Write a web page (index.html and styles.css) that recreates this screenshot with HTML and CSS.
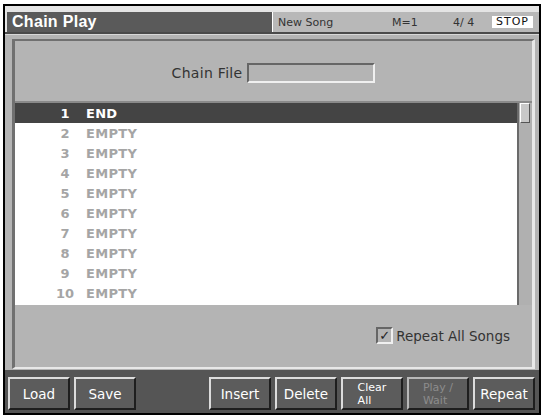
FILE: index.html
```html
<!DOCTYPE html>
<html>
<head>
<meta charset="utf-8">
<link rel="stylesheet" href="styles.css">
</head>
<body>
<div class="screen">
  <div class="topgap"></div>
  <div class="titlebar">
    <div class="tab">Chain Play</div>
    <div class="status">
      <span class="song">New Song</span>
      <span class="meas">M=1</span>
      <span class="beat">4/ 4</span>
      <span class="stop">STOP</span>
    </div>
  </div>
  <div class="body">
    <div class="panel">
      <div class="filerow">
        <span class="filelabel">Chain File</span>
        <span class="filebox"></span>
      </div>
      <div class="list">
        <div class="rows">
          <div class="row sel"><span class="num">1</span><span class="name">END</span></div>
          <div class="row"><span class="num">2</span><span class="name">EMPTY</span></div>
          <div class="row"><span class="num">3</span><span class="name">EMPTY</span></div>
          <div class="row"><span class="num">4</span><span class="name">EMPTY</span></div>
          <div class="row"><span class="num">5</span><span class="name">EMPTY</span></div>
          <div class="row"><span class="num">6</span><span class="name">EMPTY</span></div>
          <div class="row"><span class="num">7</span><span class="name">EMPTY</span></div>
          <div class="row"><span class="num">8</span><span class="name">EMPTY</span></div>
          <div class="row"><span class="num">9</span><span class="name">EMPTY</span></div>
          <div class="row"><span class="num">10</span><span class="name">EMPTY</span></div>
        </div>
        <div class="scroll"><div class="thumb"></div></div>
      </div>
      <div class="repeatrow">
        <span class="check">&#10003;</span>
        <span class="repeatlabel">Repeat All Songs</span>
      </div>
    </div>
  </div>
  <div class="buttons">
    <div class="btn">Load</div>
    <div class="btn">Save</div>
    <div class="spacer"></div>
    <div class="btn">Insert</div>
    <div class="btn">Delete</div>
    <div class="btn two"><span class="stack">Clear<br>All</span></div>
    <div class="btn two off"><span class="stack">Play /<br>Wait</span></div>
    <div class="btn">Repeat</div>
  </div>
</div>
</body>
</html>
```
FILE: styles.css
```css
html, body {
  margin: 0;
  padding: 0;
  background: #ffffff;
}
body {
  width: 545px;
  height: 417px;
  overflow: hidden;
  font-family: "DejaVu Sans", "Liberation Sans", sans-serif;
}
.screen {
  margin: 4px 0 0 3px;
  width: 538px;
  height: 411px;
  border: 2px solid #000;
  box-sizing: border-box;
  display: flex;
  flex-direction: column;
  background: #e4e4e4;
}
.topgap {
  height: 6px;
  flex: none;
}
.titlebar {
  height: 20px;
  flex: none;
  display: flex;
}
.tab {
  margin-left: 2px;
  width: 265px;
  background: #5a5a5a;
  color: #fff;
  font-family: "Liberation Sans", sans-serif;
  font-weight: bold;
  font-size: 16px;
  letter-spacing: 0.3px;
  line-height: 20px;
  padding-left: 5px;
  box-sizing: border-box;
}
.status {
  flex: 1;
  border-left: 1px solid #fff;
  background: #b8b8b8;
  display: flex;
  align-items: center;
  padding-left: 5px;
  font-size: 11px;
  color: #333;
}
.song { width: 114px; }
.meas { width: 61px; }
.beat { width: 39px; }
.stop {
  width: 41px;
  height: 12px;
  line-height: 12px;
  background: #fff;
  color: #111;
  text-align: center;
  letter-spacing: 1px;
}
.body {
  height: 338px;
  flex: none;
  box-sizing: border-box;
  background: #b4b4b4;
  border-top: 2px solid #4a4a4a;
  box-shadow: inset 0 1px 0 #d8d8d8;
  padding: 5px 4px 1px 7px;
  display: flex;
}
.panel {
  flex: 1;
  border-top: 2px solid #707070;
  border-left: 3px solid #707070;
  border-right: 3px solid #e8e8e8;
  border-bottom: 2px solid #e8e8e8;
  display: flex;
  flex-direction: column;
}
.filerow {
  display: flex;
  justify-content: center;
  align-items: center;
  gap: 5px;
  margin-top: 22px;
  height: 20px;
  margin-bottom: 18px;
}
.filelabel {
  font-size: 14px;
  letter-spacing: 0.3px;
  color: #333;
}
.filebox {
  width: 128px;
  height: 20px;
  box-sizing: border-box;
  border-top: 2px solid #666;
  border-left: 2px solid #666;
  border-right: 2px solid #f0f0f0;
  border-bottom: 2px solid #f0f0f0;
  background: #b4b4b4;
}
.list {
  height: 204px;
  box-sizing: border-box;
  background: #fff;
  border-top: 2px solid #8a8a8a;
  display: flex;
}
.rows {
  flex: 1;
}
.row {
  height: 20px;
  display: flex;
  align-items: center;
  font-weight: bold;
  font-size: 13px;
  color: #a5a5a5;
}
.row.sel {
  background: #444;
  color: #fff;
}
.num {
  width: 20px;
  margin-left: 40px;
  text-align: center;
}
.name {
  margin-left: 11px;
  letter-spacing: 0.3px;
}
.scroll {
  width: 15px;
  box-sizing: border-box;
  background: #b0b0b0;
  border-left: 2px solid #6a6a6a;
}
.thumb {
  margin-left: 1px;
  width: 10px;
  height: 20px;
  box-sizing: border-box;
  background: #c8c8c8;
  border-top: 1px solid #fff;
  border-left: 1px solid #fff;
  border-right: 1px solid #555;
  border-bottom: 1px solid #555;
}
.repeatrow {
  margin-top: 22px;
  display: flex;
  justify-content: flex-end;
  align-items: center;
  gap: 3px;
  padding-right: 22px;
}
.check {
  width: 17px;
  height: 17px;
  box-sizing: border-box;
  border-top: 2px solid #666;
  border-left: 2px solid #666;
  border-right: 2px solid #f0f0f0;
  border-bottom: 2px solid #f0f0f0;
  font-size: 13px;
  line-height: 13px;
  text-align: center;
  color: #222;
}
.repeatlabel {
  font-size: 13.5px;
  color: #333;
}
.buttons {
  height: 43px;
  flex: none;
  box-sizing: border-box;
  background: #555;
  display: flex;
  gap: 4px;
  padding: 7px 4px 3px 3px;
}
.spacer {
  flex: 1;
}
.btn {
  width: 62px;
  height: 33px;
  box-sizing: border-box;
  border: 2px solid;
  border-color: #dcdcdc #1e1e1e #1e1e1e #dcdcdc;
  background: #5c5c5c;
  color: #fff;
  font-size: 13.5px;
  display: flex;
  align-items: center;
  justify-content: center;
}
.btn.two {
  font-size: 11px;
}
.stack {
  line-height: 13px;
  text-align: left;
}
.btn.off {
  color: #8c8c8c;
  border-color: #b8b8b8 #1e1e1e #1e1e1e #b8b8b8;
}
```
